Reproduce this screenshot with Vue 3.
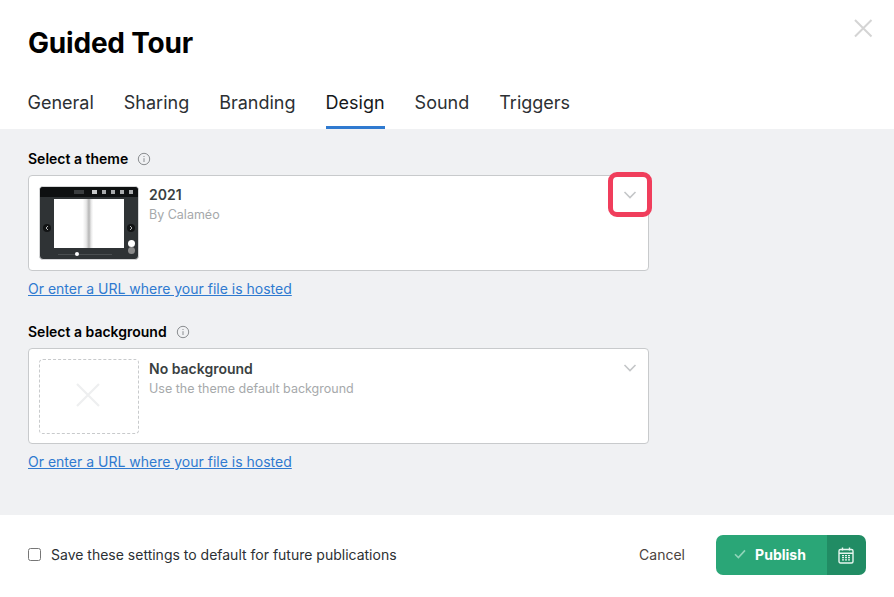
<script setup>
const tabs = ['General', 'Sharing', 'Branding', 'Design', 'Sound', 'Triggers'];
</script>

<template>
  <div class="dialog">
    <header class="top">
      <h1 class="title">Guided Tour</h1>
      <button class="close">
        <svg width="20" height="20" viewBox="0 0 20 20"><path d="M2 2L18.5 18.5M18.5 2L2 18.5" stroke="#d4d4d4" stroke-width="2" fill="none" /></svg>
      </button>
      <nav class="tabs">
        <a v-for="t in tabs" :key="t" class="tab" :class="{ active: t === 'Design' }">{{ t }}</a>
      </nav>
    </header>

    <main class="body">
      <section class="block">
        <div class="label">
          <span>Select a theme</span>
          <svg class="info" width="14" height="14" viewBox="0 0 14 14"><circle cx="7" cy="7" r="5.7" fill="none" stroke="#8a8d90" /><path d="M7 6.2V10M7 4V5" stroke="#8a8d90" fill="none" /></svg>
        </div>
        <div class="select">
          <div class="thumb">
            <div class="thumb-bar">
              <i class="tb tb-wide"></i><i class="tb tb-grid"></i><i class="tb"></i><i class="tb"></i><i class="tb"></i><i class="tb"></i>
            </div>
            <div class="thumb-main">
              <span class="nav-dot">
                <svg width="8" height="8" viewBox="0 0 8 8"><path d="M5 2L3 4L5 6" stroke="#b5b7b8" fill="none" /></svg>
              </span>
              <div class="book"><div class="page"></div><div class="page page-r"></div></div>
              <span class="nav-dot">
                <svg width="8" height="8" viewBox="0 0 8 8"><path d="M3 2L5 4L3 6" stroke="#b5b7b8" fill="none" /></svg>
              </span>
              <span class="zoom-in"></span>
              <span class="zoom-out"></span>
            </div>
            <div class="thumb-foot"><span class="track"><span class="knob"></span></span></div>
          </div>
          <div class="select-text">
            <div class="select-name">2021</div>
            <div class="select-sub">By Calaméo</div>
          </div>
          <svg class="chev" width="14" height="8" viewBox="0 0 14 8"><path d="M1.5 1L7 6.5L12.5 1" stroke="#c4c6c8" stroke-width="1.6" fill="none" /></svg>
          <span class="highlight"></span>
        </div>
        <a class="link">Or enter a URL where your file is hosted</a>
      </section>

      <section class="block">
        <div class="label">
          <span>Select a background</span>
          <svg class="info" width="14" height="14" viewBox="0 0 14 14"><circle cx="7" cy="7" r="5.7" fill="none" stroke="#8a8d90" /><path d="M7 6.2V10M7 4V5" stroke="#8a8d90" fill="none" /></svg>
        </div>
        <div class="select">
          <div class="thumb-empty">
            <svg width="26" height="26" viewBox="0 0 26 26"><path d="M2 2L24 24M24 2L2 24" stroke="#eeeff0" stroke-width="2.2" fill="none" /></svg>
          </div>
          <div class="select-text">
            <div class="select-name">No background</div>
            <div class="select-sub">Use the theme default background</div>
          </div>
          <svg class="chev" width="14" height="8" viewBox="0 0 14 8"><path d="M1.5 1L7 6.5L12.5 1" stroke="#c4c6c8" stroke-width="1.6" fill="none" /></svg>
        </div>
        <a class="link">Or enter a URL where your file is hosted</a>
      </section>
    </main>

    <footer class="foot">
      <label class="check">
        <input type="checkbox" />
        <span>Save these settings to default for future publications</span>
      </label>
      <div class="actions">
        <button class="cancel">Cancel</button>
        <div class="publish">
          <button class="publish-main">
            <svg width="12" height="10" viewBox="0 0 12 10"><path d="M1 5.2L4.4 8.6L11 1.4" stroke="#8fd4b8" stroke-width="1.6" fill="none" /></svg>
            <span>Publish</span>
          </button>
          <button class="publish-cal">
            <svg width="16" height="17" viewBox="0 0 16 17">
              <rect x="1" y="2.5" width="14" height="13.5" rx="1.5" fill="none" stroke="#e6f5ee" stroke-width="1.4" />
              <path d="M1 6.3H15M4.5 0.5V3.5M11.5 0.5V3.5" stroke="#e6f5ee" stroke-width="1.4" fill="none" />
              <path d="M4 8.7H6M7 8.7H9M10 8.7H12M4 10.7H6M7 10.7H9M10 10.7H12M4 12.8H6M7 12.8H9M10 12.8H12" stroke="#e6f5ee" stroke-width="1.2" fill="none" />
            </svg>
          </button>
        </div>
      </div>
    </footer>
  </div>
</template>

<style scoped>
.dialog {
  width: 894px;
  height: 597px;
  background: #fff;
  display: flex;
  flex-direction: column;
  font-family: Inter, "Liberation Sans", sans-serif;
  color: #111;
  overflow: hidden;
}

.top {
  position: relative;
  height: 129px;
  padding: 0 28px;
  box-sizing: border-box;
  display: flex;
  flex-direction: column;
  flex-shrink: 0;
}

.title {
  margin: 26px 0 0;
  font-size: 28px;
  line-height: 34px;
  font-weight: 700;
  color: #000;
  letter-spacing: -0.2px;
}

.close {
  position: absolute;
  top: 18px;
  right: 21px;
  padding: 0;
  border: none;
  background: none;
  width: 20px;
  height: 20px;
}

.tabs {
  display: flex;
  gap: 30px;
  margin-top: auto;
  margin-left: -0.5px;
}

.tab {
  font-size: 18px;
  line-height: 22px;
  color: #2c3033;
  padding-bottom: 12px;
  border-bottom: 3px solid transparent;
}

.tab.active {
  color: #15181a;
  border-bottom-color: #2f7ad0;
}

.body {
  flex: 1;
  background: #f0f1f3;
  padding: 21px 28px 0;
  box-sizing: border-box;
}

.block {
  width: 621px;
  margin-bottom: 25px;
}

.label {
  display: flex;
  align-items: center;
  gap: 9px;
  font-size: 14px;
  line-height: 18px;
  font-weight: 600;
  color: #000;
  margin-bottom: 7px;
}

.select {
  position: relative;
  display: flex;
  gap: 10px;
  height: 96px;
  box-sizing: border-box;
  padding: 10px;
  background: #fff;
  border: 1px solid #c8cacc;
  border-radius: 4px;
}

.thumb,
.thumb-empty {
  width: 100px;
  height: 74px;
  box-sizing: border-box;
  flex-shrink: 0;
  border-radius: 4px;
}

.thumb {
  background: #2f3335;
  display: flex;
  flex-direction: column;
  overflow: hidden;
  border: 1px solid #d6d7d8;
}

.thumb-bar {
  height: 10px;
  flex-shrink: 0;
  background: #0e1011;
  display: flex;
  justify-content: flex-end;
  align-items: center;
  gap: 5px;
  padding-right: 5px;
}

.tb {
  width: 4px;
  height: 4px;
  background: #a9abad;
}

.tb-grid {
  width: 5px;
  background: #c9cacb;
}

.tb-wide {
  width: 10px;
  background: #3a3d3f;
  margin-right: 3px;
}

.thumb-main {
  position: relative;
  flex: 1;
  display: flex;
  justify-content: space-between;
  align-items: flex-start;
  padding: 2px 3px 0;
}

.book {
  width: 70px;
  height: 49px;
  display: flex;
  background: #fff;
}

.page {
  flex: 1;
  background: linear-gradient(to right, #fff 82%, #e8e8e8 92%, #b5b5b5);
}

.page-r {
  background: linear-gradient(to left, #fff 88%, #e8e8e8 94%, #b5b5b5);
}

.nav-dot {
  width: 8px;
  height: 8px;
  margin-top: 25px;
  border-radius: 50%;
  background: #121415;
  display: flex;
}

.zoom-in,
.zoom-out {
  position: absolute;
  right: 3px;
  width: 7px;
  height: 7px;
  border-radius: 50%;
}

.zoom-in {
  top: 43px;
  background: #fff;
}

.zoom-out {
  top: 50px;
  background: #8a8a8a;
}

.thumb-foot {
  height: 10px;
  flex-shrink: 0;
  display: flex;
  justify-content: center;
  align-items: center;
}

.track {
  position: relative;
  width: 54px;
  height: 1px;
  background: #4a4e50;
  margin-right: 9px;
}

.knob {
  position: absolute;
  left: 17px;
  top: -1.5px;
  width: 4px;
  height: 4px;
  border-radius: 50%;
  background: #fff;
}

.thumb-empty {
  height: 75px;
  padding: 0 2px 4px 0;
  border: 1px dashed #c8cacc;
  display: flex;
  align-items: center;
  justify-content: center;
}

.select-text {
  flex: 1;
  padding-top: 1px;
}

.block:first-child .select-text {
  padding-top: 0;
}

.select-name {
  font-size: 14px;
  line-height: 18px;
  font-weight: 600;
  color: #3a3f42;
}

.select-sub {
  margin-top: 2px;
  font-size: 12.5px;
  line-height: 18px;
  color: #a6a9ab;
}

.chev {
  position: absolute;
  top: 15px;
  right: 11px;
}

.highlight {
  position: absolute;
  top: -4px;
  right: -4px;
  width: 44px;
  height: 45px;
  box-sizing: border-box;
  border: 5px solid #f03e5c;
  border-radius: 9px;
}

.link {
  display: inline-block;
  margin-top: 10px;
  font-size: 14px;
  line-height: 16px;
  color: #2f7ad0;
  text-decoration: underline;
}

.foot {
  height: 82px;
  flex-shrink: 0;
  padding: 0 28px 2px;
  box-sizing: border-box;
  display: flex;
  align-items: center;
  justify-content: space-between;
  background: #fff;
}

.check {
  display: flex;
  align-items: center;
  gap: 10px;
  font-size: 14px;
  color: #2c3033;
  padding-bottom: 2px;
}

.check input {
  width: 13px;
  height: 13px;
  margin: 0;
}

.actions {
  display: flex;
  align-items: center;
  gap: 31px;
}

.cancel {
  padding: 0 0 2px;
  border: none;
  background: none;
  font-family: inherit;
  font-size: 14px;
  color: #4b4340;
}

.publish {
  display: flex;
  width: 150px;
  height: 40px;
  border-radius: 7px;
  overflow: hidden;
}

.publish button {
  border: none;
  font-family: inherit;
}

.publish-main {
  flex: 1;
  background: #2aa677;
  color: #fff;
  font-size: 14px;
  font-weight: 700;
  display: flex;
  align-items: center;
  justify-content: center;
  gap: 9px;
  padding: 0 3px 2px 0;
}

.publish-cal {
  width: 39px;
  background: #218c64;
  display: flex;
  align-items: center;
  justify-content: center;
  padding: 0 2px 0 0;
}
</style>
